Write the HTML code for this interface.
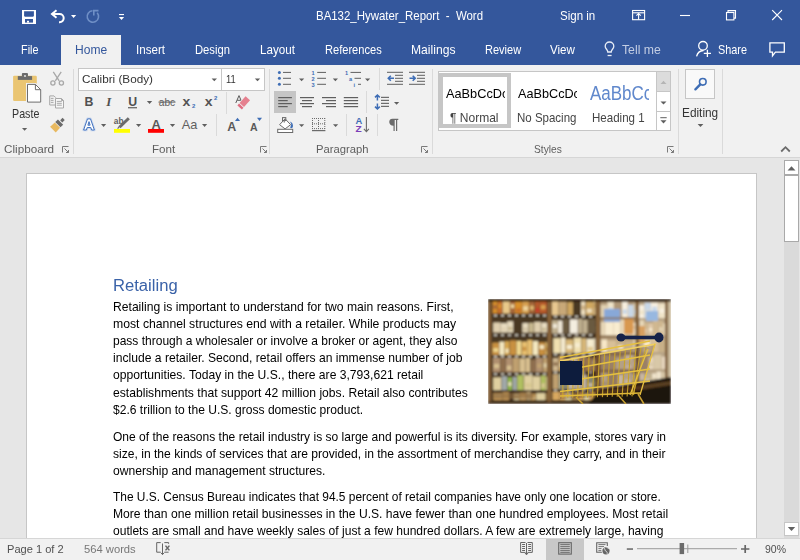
<!DOCTYPE html>
<html><head><meta charset="utf-8">
<style>
*{margin:0;padding:0;box-sizing:border-box}
html,body{width:800px;height:560px;overflow:hidden}
body{position:relative;background:#E6E6E6;font-family:"Liberation Sans",sans-serif}
.a{position:absolute}
.t{position:absolute;white-space:pre;line-height:1;transform-origin:0 0}
#ic{position:absolute;left:0;top:0;width:800px;height:560px;overflow:visible}
</style></head><body>

<!-- title bar + tabs -->
<div class="a" style="left:0;top:0;width:800px;height:65px;background:#34579C"></div>
<div class="a" style="left:61px;top:35px;width:60px;height:30px;background:#F1F1F1"></div>

<!-- ribbon body -->
<div class="a" style="left:0;top:65px;width:800px;height:92px;background:#F1F1F1"></div>
<div class="a" style="left:0;top:157px;width:800px;height:1px;background:#D6D6D6"></div>

<!-- font boxes -->
<div class="a" style="left:78px;top:68px;width:144px;height:23px;background:#fff;border:1px solid #C6C6C6"></div>
<div class="a" style="left:221px;top:68px;width:44px;height:23px;background:#fff;border:1px solid #C6C6C6"></div>
<!-- align left selected -->
<div class="a" style="left:274px;top:91px;width:22px;height:22px;background:#C5C5C5"></div>
<!-- styles gallery -->
<div class="a" style="left:438px;top:71px;width:219px;height:60px;background:#fff;border:1px solid #C6C6C6;border-right:none"></div>
<div class="a" style="left:439px;top:73px;width:72px;height:55px;border:4px solid #C6C6C6"></div>
<div class="a" style="left:656px;top:71px;width:15px;height:21px;background:#DCDCDC;border:1px solid #C6C6C6"></div>
<div class="a" style="left:656px;top:91px;width:15px;height:21px;background:#fff;border:1px solid #C6C6C6"></div>
<div class="a" style="left:656px;top:111px;width:15px;height:20px;background:#fff;border:1px solid #C6C6C6"></div>
<!-- editing button -->
<div class="a" style="left:685px;top:69px;width:30px;height:30px;background:#F9F9F9;border:1px solid #C6C6C6"></div>

<!-- document page -->
<div class="a" style="left:26px;top:173px;width:731px;height:400px;background:#fff;border:1px solid #C6C6C6"></div>
<svg class="a" style="left:488px;top:299px;width:183px;height:105px;overflow:hidden" viewBox="0 0 183 105">
<defs><filter id="bl" x="0" y="0" width="1" height="1"><feGaussianBlur stdDeviation="1.0"/></filter><filter id="bl2" x="-0.1" y="-0.1" width="1.2" height="1.2"><feGaussianBlur stdDeviation="0.4"/></filter></defs>
<g filter="url(#bl)"><rect x="0.0" y="0.0" width="183.0" height="105.0" fill="#4a3824"/>
<rect x="4.6" y="1.0" width="4.8" height="13.5" fill="#d9902a"/>
<rect x="5.4" y="6.0" width="3.3" height="4.0" fill="#a86838"/>
<rect x="9.6" y="1.8" width="4.4" height="12.7" fill="#c9702a"/>
<rect x="10.3" y="5.2" width="3.1" height="3.8" fill="#d9902a"/>
<rect x="14.6" y="1.3" width="7.2" height="13.2" fill="#e9c98a"/>
<rect x="15.7" y="4.0" width="5.0" height="4.0" fill="#e9c98a"/>
<rect x="22.1" y="1.8" width="4.7" height="12.7" fill="#a86838"/>
<rect x="22.8" y="5.3" width="3.3" height="3.8" fill="#f0d8a0"/>
<rect x="27.0" y="2.6" width="6.9" height="11.9" fill="#d9902a"/>
<rect x="28.0" y="9.5" width="4.8" height="3.6" fill="#c9702a"/>
<rect x="34.2" y="0.6" width="6.7" height="13.9" fill="#d8a050"/>
<rect x="35.2" y="7.3" width="4.7" height="4.2" fill="#f0d8a0"/>
<rect x="41.3" y="1.3" width="5.2" height="13.2" fill="#a86838"/>
<rect x="42.1" y="6.8" width="3.7" height="4.0" fill="#e0b870"/>
<rect x="47.1" y="1.8" width="4.6" height="12.7" fill="#b85a2a"/>
<rect x="47.8" y="9.2" width="3.2" height="3.8" fill="#c83a2a"/>
<rect x="51.8" y="0.5" width="6.8" height="14.0" fill="#b85a2a"/>
<rect x="52.8" y="6.1" width="4.8" height="4.2" fill="#d8a050"/>
<rect x="58.7" y="2.4" width="0.3" height="12.1" fill="#c83a2a"/>
<rect x="5.2" y="23.5" width="7.4" height="10.0" fill="#e0d0b0"/>
<rect x="12.7" y="24.2" width="6.3" height="9.3" fill="#e8dcc0"/>
<rect x="13.6" y="28.7" width="4.4" height="2.8" fill="#e0d0b0"/>
<rect x="19.2" y="22.3" width="6.0" height="11.2" fill="#e8dcc0"/>
<rect x="20.1" y="27.8" width="4.2" height="3.4" fill="#c8b890"/>
<rect x="34.4" y="24.1" width="5.9" height="9.4" fill="#e8dcc0"/>
<rect x="35.3" y="28.8" width="4.1" height="2.8" fill="#d0c0a0"/>
<rect x="40.8" y="23.9" width="4.9" height="9.6" fill="#c8b890"/>
<rect x="41.6" y="27.5" width="3.4" height="2.9" fill="#c8b890"/>
<rect x="46.2" y="23.0" width="6.6" height="10.5" fill="#e0d0b0"/>
<rect x="47.2" y="25.6" width="4.6" height="3.1" fill="#e0d0b0"/>
<rect x="53.3" y="23.6" width="5.7" height="9.9" fill="#e8dcc0"/>
<rect x="54.1" y="28.8" width="4.0" height="3.0" fill="#c8b890"/>
<rect x="4.2" y="43.6" width="7.0" height="12.4" fill="#c89040"/>
<rect x="5.3" y="49.2" width="4.9" height="3.7" fill="#f0d890"/>
<rect x="11.4" y="42.6" width="5.0" height="13.4" fill="#f4e8c0"/>
<rect x="16.7" y="42.2" width="4.6" height="13.8" fill="#d8a850"/>
<rect x="17.4" y="49.7" width="3.2" height="4.1" fill="#f4e8c0"/>
<rect x="21.8" y="41.4" width="6.4" height="14.6" fill="#c89040"/>
<rect x="28.5" y="42.0" width="4.7" height="14.0" fill="#f0d890"/>
<rect x="29.2" y="46.8" width="3.3" height="4.2" fill="#f0d890"/>
<rect x="33.7" y="42.6" width="5.3" height="13.4" fill="#e8c070"/>
<rect x="34.5" y="47.8" width="3.7" height="4.0" fill="#c89040"/>
<rect x="39.3" y="41.0" width="5.1" height="15.0" fill="#e8c070"/>
<rect x="44.9" y="42.1" width="5.1" height="13.9" fill="#f4e8c0"/>
<rect x="50.5" y="43.3" width="6.4" height="12.7" fill="#c89040"/>
<rect x="51.5" y="46.1" width="4.5" height="3.8" fill="#f4e8c0"/>
<rect x="57.4" y="43.2" width="1.6" height="12.8" fill="#e8c070"/>
<rect x="57.7" y="48.4" width="1.1" height="3.8" fill="#c89040"/>
<rect x="5.0" y="58.5" width="7.3" height="14.5" fill="#b09070"/>
<rect x="6.0" y="64.9" width="5.1" height="4.3" fill="#d8c090"/>
<rect x="12.6" y="58.5" width="4.9" height="14.5" fill="#907050"/>
<rect x="17.9" y="58.7" width="6.3" height="14.3" fill="#b09070"/>
<rect x="18.9" y="66.6" width="4.4" height="4.3" fill="#d8c090"/>
<rect x="24.6" y="59.0" width="6.3" height="14.0" fill="#c0a070"/>
<rect x="31.4" y="59.4" width="5.8" height="13.6" fill="#d8c090"/>
<rect x="37.6" y="58.7" width="4.5" height="14.3" fill="#d8c090"/>
<rect x="42.6" y="60.5" width="5.1" height="12.5" fill="#907050"/>
<rect x="47.9" y="58.4" width="6.7" height="14.6" fill="#b09070"/>
<rect x="49.0" y="64.5" width="4.7" height="4.4" fill="#c0a070"/>
<rect x="55.2" y="58.4" width="3.8" height="14.6" fill="#c0a070"/>
<rect x="55.7" y="64.2" width="2.7" height="4.4" fill="#e0d0a8"/>
<rect x="5.2" y="78.4" width="7.9" height="12.6" fill="#e0d0a0"/>
<rect x="13.5" y="77.1" width="5.6" height="13.9" fill="#a0a8a8"/>
<rect x="19.6" y="78.3" width="4.3" height="12.7" fill="#90b848"/>
<rect x="20.3" y="83.1" width="3.0" height="3.8" fill="#e8e0c0"/>
<rect x="24.5" y="77.8" width="4.3" height="13.2" fill="#a0a8a8"/>
<rect x="25.1" y="84.2" width="3.0" height="4.0" fill="#a0a8a8"/>
<rect x="29.2" y="75.5" width="6.4" height="15.5" fill="#b0c060"/>
<rect x="36.1" y="75.7" width="8.6" height="15.3" fill="#e0d0a0"/>
<rect x="37.4" y="84.1" width="6.0" height="4.6" fill="#d8c890"/>
<rect x="45.0" y="77.4" width="7.4" height="13.6" fill="#e0d0a0"/>
<rect x="52.9" y="76.3" width="4.8" height="14.7" fill="#b0c060"/>
<rect x="53.6" y="84.3" width="3.3" height="4.4" fill="#d8c890"/>
<rect x="57.9" y="77.5" width="1.1" height="13.5" fill="#d8c890"/>
<rect x="4.0" y="15.5" width="55.0" height="2.2" fill="#3a2e20"/>
<rect x="6.0" y="15.8" width="3.0" height="1.5" fill="#e8e4d8"/>
<rect x="13.0" y="15.8" width="3.0" height="1.5" fill="#e8e4d8"/>
<rect x="20.0" y="15.8" width="3.0" height="1.5" fill="#e8e4d8"/>
<rect x="27.0" y="15.8" width="3.0" height="1.5" fill="#e8e4d8"/>
<rect x="34.0" y="15.8" width="3.0" height="1.5" fill="#e8e4d8"/>
<rect x="41.0" y="15.8" width="3.0" height="1.5" fill="#e8e4d8"/>
<rect x="48.0" y="15.8" width="3.0" height="1.5" fill="#e8e4d8"/>
<rect x="55.0" y="15.8" width="3.0" height="1.5" fill="#e8e4d8"/>
<rect x="4.0" y="35.0" width="55.0" height="2.2" fill="#3a2e20"/>
<rect x="6.0" y="35.3" width="3.0" height="1.5" fill="#e8e4d8"/>
<rect x="13.0" y="35.3" width="3.0" height="1.5" fill="#e8e4d8"/>
<rect x="20.0" y="35.3" width="3.0" height="1.5" fill="#e8e4d8"/>
<rect x="27.0" y="35.3" width="3.0" height="1.5" fill="#e8e4d8"/>
<rect x="34.0" y="35.3" width="3.0" height="1.5" fill="#e8e4d8"/>
<rect x="41.0" y="35.3" width="3.0" height="1.5" fill="#e8e4d8"/>
<rect x="48.0" y="35.3" width="3.0" height="1.5" fill="#e8e4d8"/>
<rect x="55.0" y="35.3" width="3.0" height="1.5" fill="#e8e4d8"/>
<rect x="4.0" y="56.5" width="55.0" height="2.2" fill="#3a2e20"/>
<rect x="6.0" y="56.8" width="3.0" height="1.5" fill="#e8e4d8"/>
<rect x="13.0" y="56.8" width="3.0" height="1.5" fill="#e8e4d8"/>
<rect x="20.0" y="56.8" width="3.0" height="1.5" fill="#e8e4d8"/>
<rect x="27.0" y="56.8" width="3.0" height="1.5" fill="#e8e4d8"/>
<rect x="34.0" y="56.8" width="3.0" height="1.5" fill="#e8e4d8"/>
<rect x="41.0" y="56.8" width="3.0" height="1.5" fill="#e8e4d8"/>
<rect x="48.0" y="56.8" width="3.0" height="1.5" fill="#e8e4d8"/>
<rect x="55.0" y="56.8" width="3.0" height="1.5" fill="#e8e4d8"/>
<rect x="4.0" y="74.0" width="55.0" height="2.2" fill="#3a2e20"/>
<rect x="6.0" y="74.3" width="3.0" height="1.5" fill="#e8e4d8"/>
<rect x="13.0" y="74.3" width="3.0" height="1.5" fill="#e8e4d8"/>
<rect x="20.0" y="74.3" width="3.0" height="1.5" fill="#e8e4d8"/>
<rect x="27.0" y="74.3" width="3.0" height="1.5" fill="#e8e4d8"/>
<rect x="34.0" y="74.3" width="3.0" height="1.5" fill="#e8e4d8"/>
<rect x="41.0" y="74.3" width="3.0" height="1.5" fill="#e8e4d8"/>
<rect x="48.0" y="74.3" width="3.0" height="1.5" fill="#e8e4d8"/>
<rect x="55.0" y="74.3" width="3.0" height="1.5" fill="#e8e4d8"/>
<rect x="4.0" y="91.5" width="55.0" height="2.2" fill="#3a2e20"/>
<rect x="6.0" y="91.8" width="3.0" height="1.5" fill="#e8e4d8"/>
<rect x="13.0" y="91.8" width="3.0" height="1.5" fill="#e8e4d8"/>
<rect x="20.0" y="91.8" width="3.0" height="1.5" fill="#e8e4d8"/>
<rect x="27.0" y="91.8" width="3.0" height="1.5" fill="#e8e4d8"/>
<rect x="34.0" y="91.8" width="3.0" height="1.5" fill="#e8e4d8"/>
<rect x="41.0" y="91.8" width="3.0" height="1.5" fill="#e8e4d8"/>
<rect x="48.0" y="91.8" width="3.0" height="1.5" fill="#e8e4d8"/>
<rect x="55.0" y="91.8" width="3.0" height="1.5" fill="#e8e4d8"/>
<rect x="4.0" y="92.0" width="55.0" height="11.0" fill="#3a2c1c"/>
<rect x="5.4" y="93.8" width="9.0" height="7.2" fill="#d8a860"/>
<rect x="6.8" y="96.0" width="6.3" height="2.2" fill="#c8b080"/>
<rect x="14.7" y="93.2" width="6.3" height="7.8" fill="#d8a860"/>
<rect x="25.8" y="94.5" width="5.3" height="6.5" fill="#e0d0a0"/>
<rect x="26.6" y="97.3" width="3.7" height="1.9" fill="#a08050"/>
<rect x="31.4" y="93.6" width="6.7" height="7.4" fill="#d8a860"/>
<rect x="32.4" y="97.9" width="4.7" height="2.2" fill="#e0d0a0"/>
<rect x="38.4" y="92.7" width="4.4" height="8.3" fill="#c8b080"/>
<rect x="39.1" y="94.9" width="3.1" height="2.5" fill="#c8b080"/>
<rect x="43.0" y="94.6" width="4.6" height="6.4" fill="#d8a860"/>
<rect x="43.7" y="98.1" width="3.2" height="1.9" fill="#e0d0a0"/>
<rect x="48.2" y="94.1" width="8.8" height="6.9" fill="#e0d0a0"/>
<rect x="49.5" y="97.4" width="6.2" height="2.1" fill="#e0d0a0"/>
<rect x="57.3" y="94.2" width="1.7" height="6.8" fill="#a08050"/>
<rect x="6.0" y="94.0" width="40.0" height="6.0" fill="#8a6a40" opacity="0.7"/>
<rect x="64.0" y="0.3" width="6.5" height="15.7" fill="#e8c890"/>
<rect x="70.7" y="2.4" width="8.1" height="13.6" fill="#c8a878"/>
<rect x="79.4" y="3.2" width="5.5" height="12.8" fill="#d0a860"/>
<rect x="93.1" y="1.7" width="4.1" height="14.3" fill="#f0e0c0"/>
<rect x="93.7" y="6.4" width="2.8" height="4.3" fill="#c8a878"/>
<rect x="97.7" y="2.9" width="7.4" height="13.1" fill="#d0a860"/>
<rect x="98.8" y="9.8" width="5.1" height="3.9" fill="#f0e0c0"/>
<rect x="105.4" y="0.4" width="2.2" height="15.6" fill="#e8c890"/>
<rect x="105.7" y="4.2" width="1.6" height="4.7" fill="#d0a860"/>
<rect x="64.0" y="21.2" width="5.9" height="13.3" fill="#c0b090"/>
<rect x="64.9" y="25.0" width="4.1" height="4.0" fill="#f0e8d8"/>
<rect x="70.1" y="21.5" width="4.4" height="13.0" fill="#f0e8d8"/>
<rect x="70.8" y="26.0" width="3.1" height="3.9" fill="#f0e8d8"/>
<rect x="75.0" y="20.2" width="6.6" height="14.3" fill="#6a5a40"/>
<rect x="82.0" y="20.3" width="7.8" height="14.2" fill="#f4eee0"/>
<rect x="90.3" y="19.9" width="4.2" height="14.6" fill="#c0b090"/>
<rect x="95.0" y="21.0" width="4.7" height="13.5" fill="#c0b090"/>
<rect x="99.8" y="20.0" width="7.4" height="14.5" fill="#6a5a40"/>
<rect x="107.4" y="22.4" width="0.2" height="12.1" fill="#5aa0a0"/>
<rect x="107.5" y="27.5" width="0.1" height="3.6" fill="#f0e8d8"/>
<rect x="65.3" y="39.2" width="7.4" height="14.8" fill="#f0e0b0"/>
<rect x="66.4" y="42.6" width="5.2" height="4.4" fill="#f0e0b0"/>
<rect x="73.1" y="38.3" width="4.3" height="15.7" fill="#f6ecd0"/>
<rect x="77.6" y="40.3" width="7.8" height="13.7" fill="#d8b878"/>
<rect x="78.8" y="45.9" width="5.4" height="4.1" fill="#f6ecd0"/>
<rect x="85.9" y="38.6" width="7.1" height="15.4" fill="#f0e0b0"/>
<rect x="87.0" y="43.8" width="5.0" height="4.6" fill="#f6ecd0"/>
<rect x="93.4" y="39.3" width="4.7" height="14.7" fill="#d8b878"/>
<rect x="98.5" y="40.0" width="7.4" height="14.0" fill="#f6ecd0"/>
<rect x="99.6" y="47.8" width="5.2" height="4.2" fill="#e0c890"/>
<rect x="106.1" y="39.3" width="1.5" height="14.7" fill="#f6ecd0"/>
<rect x="64.9" y="59.2" width="5.3" height="12.8" fill="#d0b890"/>
<rect x="65.7" y="63.1" width="3.7" height="3.8" fill="#907050"/>
<rect x="70.8" y="56.9" width="4.7" height="15.1" fill="#c8a060"/>
<rect x="71.5" y="63.8" width="3.3" height="4.5" fill="#e0d0a8"/>
<rect x="76.0" y="59.9" width="6.4" height="12.1" fill="#b09070"/>
<rect x="82.8" y="58.4" width="7.6" height="13.6" fill="#e0d0a8"/>
<rect x="90.5" y="56.9" width="7.8" height="15.1" fill="#b09070"/>
<rect x="91.7" y="65.9" width="5.4" height="4.5" fill="#907050"/>
<rect x="98.5" y="58.5" width="4.3" height="13.5" fill="#c8a060"/>
<rect x="103.3" y="58.9" width="4.3" height="13.1" fill="#b09070"/>
<rect x="103.9" y="61.9" width="3.0" height="3.9" fill="#d0b890"/>
<rect x="64.9" y="75.1" width="5.6" height="14.9" fill="#c0a070"/>
<rect x="70.9" y="74.5" width="8.6" height="15.5" fill="#a0a890"/>
<rect x="72.2" y="78.0" width="6.0" height="4.7" fill="#c0a070"/>
<rect x="79.8" y="75.6" width="7.8" height="14.4" fill="#e8e0c8"/>
<rect x="87.9" y="76.4" width="4.9" height="13.6" fill="#e8e0c8"/>
<rect x="93.3" y="75.5" width="5.3" height="14.5" fill="#e8e0c8"/>
<rect x="98.8" y="77.7" width="7.2" height="12.3" fill="#a0a890"/>
<rect x="99.9" y="84.0" width="5.1" height="3.7" fill="#e8e0c8"/>
<rect x="106.6" y="77.5" width="1.0" height="12.5" fill="#98c058"/>
<rect x="106.8" y="82.2" width="0.7" height="3.8" fill="#e8e0c8"/>
<rect x="64.0" y="16.5" width="43.6" height="2.2" fill="#3a2e20"/>
<rect x="66.0" y="16.8" width="3.0" height="1.5" fill="#e8e4d8"/>
<rect x="73.0" y="16.8" width="3.0" height="1.5" fill="#e8e4d8"/>
<rect x="80.0" y="16.8" width="3.0" height="1.5" fill="#e8e4d8"/>
<rect x="87.0" y="16.8" width="3.0" height="1.5" fill="#e8e4d8"/>
<rect x="94.0" y="16.8" width="3.0" height="1.5" fill="#e8e4d8"/>
<rect x="101.0" y="16.8" width="3.0" height="1.5" fill="#e8e4d8"/>
<rect x="64.0" y="35.0" width="43.6" height="2.2" fill="#3a2e20"/>
<rect x="66.0" y="35.3" width="3.0" height="1.5" fill="#e8e4d8"/>
<rect x="73.0" y="35.3" width="3.0" height="1.5" fill="#e8e4d8"/>
<rect x="80.0" y="35.3" width="3.0" height="1.5" fill="#e8e4d8"/>
<rect x="87.0" y="35.3" width="3.0" height="1.5" fill="#e8e4d8"/>
<rect x="94.0" y="35.3" width="3.0" height="1.5" fill="#e8e4d8"/>
<rect x="101.0" y="35.3" width="3.0" height="1.5" fill="#e8e4d8"/>
<rect x="64.0" y="54.5" width="43.6" height="2.2" fill="#3a2e20"/>
<rect x="66.0" y="54.8" width="3.0" height="1.5" fill="#e8e4d8"/>
<rect x="73.0" y="54.8" width="3.0" height="1.5" fill="#e8e4d8"/>
<rect x="80.0" y="54.8" width="3.0" height="1.5" fill="#e8e4d8"/>
<rect x="87.0" y="54.8" width="3.0" height="1.5" fill="#e8e4d8"/>
<rect x="94.0" y="54.8" width="3.0" height="1.5" fill="#e8e4d8"/>
<rect x="101.0" y="54.8" width="3.0" height="1.5" fill="#e8e4d8"/>
<rect x="64.0" y="72.5" width="43.6" height="2.2" fill="#3a2e20"/>
<rect x="66.0" y="72.8" width="3.0" height="1.5" fill="#e8e4d8"/>
<rect x="73.0" y="72.8" width="3.0" height="1.5" fill="#e8e4d8"/>
<rect x="80.0" y="72.8" width="3.0" height="1.5" fill="#e8e4d8"/>
<rect x="87.0" y="72.8" width="3.0" height="1.5" fill="#e8e4d8"/>
<rect x="94.0" y="72.8" width="3.0" height="1.5" fill="#e8e4d8"/>
<rect x="101.0" y="72.8" width="3.0" height="1.5" fill="#e8e4d8"/>
<rect x="64.0" y="90.5" width="43.6" height="2.2" fill="#3a2e20"/>
<rect x="66.0" y="90.8" width="3.0" height="1.5" fill="#e8e4d8"/>
<rect x="73.0" y="90.8" width="3.0" height="1.5" fill="#e8e4d8"/>
<rect x="80.0" y="90.8" width="3.0" height="1.5" fill="#e8e4d8"/>
<rect x="87.0" y="90.8" width="3.0" height="1.5" fill="#e8e4d8"/>
<rect x="94.0" y="90.8" width="3.0" height="1.5" fill="#e8e4d8"/>
<rect x="101.0" y="90.8" width="3.0" height="1.5" fill="#e8e4d8"/>
<rect x="64.0" y="92.0" width="43.6" height="11.0" fill="#3a2c1c"/>
<rect x="64.5" y="92.8" width="6.8" height="8.2" fill="#d8a860"/>
<rect x="71.6" y="93.1" width="5.4" height="7.9" fill="#d8a860"/>
<rect x="77.1" y="93.3" width="6.5" height="7.7" fill="#e0d0a0"/>
<rect x="83.9" y="93.7" width="7.2" height="7.3" fill="#a08050"/>
<rect x="91.2" y="93.2" width="4.2" height="7.8" fill="#d8a860"/>
<rect x="91.9" y="97.6" width="2.9" height="2.3" fill="#d8a860"/>
<rect x="96.0" y="94.4" width="5.2" height="6.6" fill="#e0d0a0"/>
<rect x="101.4" y="93.2" width="6.2" height="7.8" fill="#d8a860"/>
<rect x="112.0" y="3.0" width="35.6" height="88.0" fill="#b09878"/>
<rect x="112.3" y="5.9" width="6.8" height="12.1" fill="#e0d0b0"/>
<rect x="119.5" y="3.1" width="6.2" height="14.9" fill="#f0e4c8"/>
<rect x="120.4" y="8.6" width="4.3" height="4.5" fill="#c8d8e8"/>
<rect x="134.1" y="2.9" width="5.6" height="15.1" fill="#f8f0e0"/>
<rect x="134.9" y="10.4" width="3.9" height="4.5" fill="#c8d8e8"/>
<rect x="140.1" y="5.9" width="5.5" height="12.1" fill="#c8d8e8"/>
<rect x="145.8" y="4.4" width="1.8" height="13.6" fill="#e0d0b0"/>
<rect x="146.1" y="10.7" width="1.3" height="4.1" fill="#c8d8e8"/>
<rect x="112.8" y="22.9" width="4.0" height="13.1" fill="#e8d8b8"/>
<rect x="117.1" y="23.1" width="8.1" height="12.9" fill="#f8ecd0"/>
<rect x="125.3" y="21.7" width="7.1" height="14.3" fill="#f8ecd0"/>
<rect x="132.6" y="20.5" width="7.0" height="15.5" fill="#e8d8b8"/>
<rect x="139.7" y="23.8" width="4.3" height="12.2" fill="#e0c8a8"/>
<rect x="144.2" y="23.7" width="3.4" height="12.3" fill="#f8ecd0"/>
<rect x="144.7" y="26.5" width="2.3" height="3.7" fill="#e0c8a8"/>
<rect x="113.3" y="40.5" width="5.9" height="12.5" fill="#f8e8c8"/>
<rect x="114.2" y="47.6" width="4.1" height="3.8" fill="#f0e0c0"/>
<rect x="119.5" y="41.4" width="8.8" height="11.6" fill="#d8c098"/>
<rect x="128.5" y="41.5" width="8.0" height="11.5" fill="#c8b088"/>
<rect x="129.7" y="46.3" width="5.6" height="3.5" fill="#f8e8c8"/>
<rect x="136.8" y="41.7" width="8.5" height="11.3" fill="#c8b088"/>
<rect x="145.6" y="40.2" width="2.0" height="12.8" fill="#f0e0c0"/>
<rect x="112.7" y="55.4" width="5.4" height="14.6" fill="#b8a080"/>
<rect x="118.5" y="57.8" width="8.6" height="12.2" fill="#b8a080"/>
<rect x="127.5" y="58.7" width="8.7" height="11.3" fill="#d8c8a8"/>
<rect x="136.6" y="56.0" width="7.9" height="14.0" fill="#e8d8c0"/>
<rect x="137.8" y="61.6" width="5.5" height="4.2" fill="#d8c8a8"/>
<rect x="145.0" y="55.9" width="2.6" height="14.1" fill="#d8c8a8"/>
<rect x="145.4" y="62.6" width="1.9" height="4.2" fill="#e8d8c0"/>
<rect x="113.2" y="74.5" width="6.6" height="13.5" fill="#d8c8a8"/>
<rect x="114.2" y="82.4" width="4.6" height="4.0" fill="#c0b090"/>
<rect x="130.2" y="75.5" width="4.9" height="12.5" fill="#f0e4cc"/>
<rect x="135.5" y="73.5" width="8.2" height="14.5" fill="#d8c8a8"/>
<rect x="136.7" y="80.6" width="5.8" height="4.3" fill="#f0e4cc"/>
<rect x="144.0" y="75.3" width="3.6" height="12.7" fill="#d8c8a8"/>
<rect x="144.6" y="81.5" width="2.5" height="3.8" fill="#c0b090"/>
<rect x="116.0" y="10.0" width="16.0" height="13.0" fill="#88a8d8"/>
<rect x="136.0" y="18.0" width="9.5" height="17.0" fill="#d89850"/>
<rect x="112.0" y="18.5" width="35.6" height="1.6" fill="#8a7050"/>
<rect x="112.0" y="37.0" width="35.6" height="1.6" fill="#8a7050"/>
<rect x="112.0" y="54.0" width="35.6" height="1.6" fill="#8a7050"/>
<rect x="112.0" y="71.0" width="35.6" height="1.6" fill="#8a7050"/>
<rect x="112.0" y="88.5" width="35.6" height="1.6" fill="#8a7050"/>
<rect x="151.0" y="3.0" width="26.0" height="85.0" fill="#b8a486"/>
<rect x="151.1" y="6.1" width="5.3" height="12.9" fill="#f8f0e0"/>
<rect x="151.9" y="11.4" width="3.7" height="3.9" fill="#f0e4c8"/>
<rect x="156.5" y="3.9" width="6.4" height="15.1" fill="#c8d8e8"/>
<rect x="157.5" y="11.2" width="4.5" height="4.5" fill="#f0e4c8"/>
<rect x="163.0" y="3.9" width="7.0" height="15.1" fill="#f8f0e0"/>
<rect x="164.1" y="7.7" width="4.9" height="4.5" fill="#c8d8e8"/>
<rect x="170.4" y="4.5" width="6.6" height="14.5" fill="#f0e4c8"/>
<rect x="171.4" y="9.6" width="4.6" height="4.3" fill="#f8f0e0"/>
<rect x="151.7" y="21.3" width="4.2" height="14.7" fill="#e8d8b8"/>
<rect x="156.1" y="23.7" width="4.1" height="12.3" fill="#d0b890"/>
<rect x="156.7" y="30.1" width="2.8" height="3.7" fill="#e0c8a8"/>
<rect x="160.5" y="24.4" width="4.3" height="11.6" fill="#e0c8a8"/>
<rect x="161.2" y="28.9" width="3.0" height="3.5" fill="#f8ecd0"/>
<rect x="165.1" y="21.3" width="5.4" height="14.7" fill="#d0b890"/>
<rect x="166.0" y="25.8" width="3.7" height="4.4" fill="#d0b890"/>
<rect x="170.8" y="22.1" width="4.1" height="13.9" fill="#d0b890"/>
<rect x="171.4" y="28.2" width="2.9" height="4.2" fill="#e8d8b8"/>
<rect x="175.2" y="24.4" width="1.8" height="11.6" fill="#e8d8b8"/>
<rect x="151.3" y="39.9" width="4.1" height="13.1" fill="#c8b088"/>
<rect x="155.7" y="41.3" width="6.5" height="11.7" fill="#f8e8c8"/>
<rect x="156.7" y="48.0" width="4.6" height="3.5" fill="#c8b088"/>
<rect x="162.6" y="38.4" width="8.0" height="14.6" fill="#d8c098"/>
<rect x="170.7" y="40.7" width="6.3" height="12.3" fill="#c8b088"/>
<rect x="152.8" y="55.8" width="7.2" height="14.2" fill="#b8a080"/>
<rect x="160.5" y="58.0" width="4.9" height="12.0" fill="#e8d8c0"/>
<rect x="161.2" y="63.5" width="3.4" height="3.6" fill="#d8c8a8"/>
<rect x="165.6" y="55.7" width="7.6" height="14.3" fill="#d8c8a8"/>
<rect x="173.7" y="57.7" width="3.3" height="12.3" fill="#e8d8c0"/>
<rect x="174.2" y="62.0" width="2.3" height="3.7" fill="#e8d8c0"/>
<rect x="151.6" y="74.3" width="5.2" height="11.7" fill="#f0e4cc"/>
<rect x="152.4" y="81.2" width="3.7" height="3.5" fill="#c0b090"/>
<rect x="157.5" y="74.1" width="6.3" height="11.9" fill="#c0b090"/>
<rect x="158.4" y="80.4" width="4.4" height="3.6" fill="#f0e4cc"/>
<rect x="164.1" y="74.4" width="4.3" height="11.6" fill="#f0e4cc"/>
<rect x="164.7" y="79.0" width="3.0" height="3.5" fill="#d8c8a8"/>
<rect x="168.5" y="72.6" width="4.7" height="13.4" fill="#f0e4cc"/>
<rect x="169.2" y="80.4" width="3.3" height="4.0" fill="#c0b090"/>
<rect x="173.7" y="73.1" width="3.3" height="12.9" fill="#d8c8a8"/>
<rect x="158.0" y="12.0" width="12.0" height="10.0" fill="#98b8e0"/>
<rect x="149.0" y="27.0" width="8.0" height="16.0" fill="#d8a060"/>
<rect x="179.3" y="0.0" width="3.7" height="90.0" fill="#c8b898"/>
<rect x="0.0" y="0.0" width="3.5" height="103.0" fill="#6e4e2a"/>
<rect x="1.1" y="0.0" width="1.2" height="103.0" fill="#a07848" opacity="0.8"/>
<rect x="59.0" y="0.0" width="5.0" height="103.0" fill="#6e4e2a"/>
<rect x="60.5" y="0.0" width="1.8" height="103.0" fill="#a07848" opacity="0.8"/>
<rect x="107.6" y="0.0" width="4.7" height="103.0" fill="#6e4e2a"/>
<rect x="109.0" y="0.0" width="1.6" height="103.0" fill="#a07848" opacity="0.8"/>
<rect x="147.6" y="0.0" width="3.4" height="103.0" fill="#6e4e2a"/>
<rect x="148.6" y="0.0" width="1.2" height="103.0" fill="#a07848" opacity="0.8"/>
<rect x="177.0" y="0.0" width="2.3" height="103.0" fill="#6e4e2a"/>
<rect x="177.7" y="0.0" width="0.8" height="103.0" fill="#a07848" opacity="0.8"/>
<rect x="0.0" y="0.0" width="183.0" height="2.5" fill="#2a1e10"/>
<rect x="0.0" y="102.5" width="183.0" height="2.5" fill="#4a3520"/>
<path d="M112,90 L183,78 L183,105 L100,105 Z" fill="#1c140c"/>
<path d="M112,92 L183,82 L183,86 L112,97 Z" fill="#6a4a28" opacity="0.8"/></g>
<g filter="url(#bl2)"><path d="M72,63 L167,46 L152,96 L72,100 Z" fill="#1e160c" opacity="0.2"/><path d="M75.0,62.5 L74.8,98.9" stroke="#c9a22a" stroke-width="1.1" opacity="0.95"/><path d="M80.2,61.5 L79.8,98.8" stroke="#c9a22a" stroke-width="1.1" opacity="0.95"/><path d="M85.4,60.6 L84.7,98.7" stroke="#c9a22a" stroke-width="1.1" opacity="0.95"/><path d="M90.6,59.7 L89.7,98.6" stroke="#c9a22a" stroke-width="1.1" opacity="0.95"/><path d="M95.8,58.7 L94.6,98.5" stroke="#c9a22a" stroke-width="1.1" opacity="0.95"/><path d="M101.0,57.8 L99.5,98.4" stroke="#c9a22a" stroke-width="1.1" opacity="0.95"/><path d="M106.2,56.9 L104.5,98.3" stroke="#c9a22a" stroke-width="1.1" opacity="0.95"/><path d="M111.4,55.9 L109.4,98.2" stroke="#c9a22a" stroke-width="1.1" opacity="0.95"/><path d="M116.6,55.0 L114.4,98.1" stroke="#c9a22a" stroke-width="1.1" opacity="0.95"/><path d="M121.8,54.1 L119.3,98.0" stroke="#c9a22a" stroke-width="1.1" opacity="0.95"/><path d="M127.0,53.2 L124.2,97.8" stroke="#c9a22a" stroke-width="1.1" opacity="0.95"/><path d="M132.2,52.2 L129.2,97.7" stroke="#c9a22a" stroke-width="1.1" opacity="0.95"/><path d="M137.4,51.3 L134.1,97.6" stroke="#c9a22a" stroke-width="1.1" opacity="0.95"/><path d="M142.6,50.4 L139.1,97.5" stroke="#c9a22a" stroke-width="1.1" opacity="0.95"/><path d="M147.8,49.4 L144.0,97.4" stroke="#c9a22a" stroke-width="1.1" opacity="0.95"/><path d="M153.0,48.5 L145.6,96.0" stroke="#c9a22a" stroke-width="1.1" opacity="0.95"/><path d="M158.2,47.6 L144.9,96.0" stroke="#c9a22a" stroke-width="1.1" opacity="0.95"/><path d="M72,58.5 L162,42" stroke="#e6c040" stroke-width="1.3"/><path d="M72,72 L162,56" stroke="#e6c040" stroke-width="1.3"/><path d="M72,83 L162,70" stroke="#e6c040" stroke-width="1.3"/><path d="M72,92.5 L162,82" stroke="#e6c040" stroke-width="1.3"/><path d="M72,62 L168,45" stroke="#f0d060" stroke-width="1.6"/><path d="M167,45 L152,96 M160,50 L142,96" stroke="#e6c040" stroke-width="1.3"/><path d="M88,98 L95,105 M130,96 L138,105 M150,95 L156,105" stroke="#c8a030" stroke-width="1.5"/><path d="M72,97 L152,94" stroke="#e0b838" stroke-width="1.6"/><rect x="72" y="62" width="22" height="24" fill="#101c3c"/><path d="M132,38.5 L172,38.5" stroke="#12204a" stroke-width="3.4"/><ellipse cx="133" cy="38.5" rx="4.5" ry="4" fill="#12204a"/><ellipse cx="171" cy="38.5" rx="4.5" ry="5" fill="#12204a"/></g>
</svg>
<!-- scrollbar -->
<div class="a" style="left:784px;top:160px;width:15px;height:378px;background:#DADADA"></div>
<div class="a" style="left:784px;top:160px;width:15px;height:15px;background:#fff;border:1px solid #A9A9A9"></div>
<div class="a" style="left:784px;top:175px;width:15px;height:67px;background:#fff;border:1px solid #A9A9A9"></div>
<div class="a" style="left:784px;top:522px;width:15px;height:14px;background:#fff;border:1px solid #C6C6C6"></div>

<!-- status bar -->
<div class="a" style="left:0;top:538px;width:800px;height:22px;background:#F1F1F1;border-top:1px solid #D6D6D6"></div>
<div class="a" style="left:546px;top:539px;width:38px;height:21px;background:#C8C8C8"></div>

<svg id="ic" viewBox="0 0 800 560">
<!-- ===== title bar icons ===== -->
<g fill="#fff">
  <rect x="22" y="10" width="14" height="14"/>
</g>
<g fill="#34579C">
  <path d="M24.1,11.3 H33.9 V15.9 L33.1,16.7 H24.9 L24.1,15.9 Z"/>
  <rect x="25" y="19" width="8" height="3.6"/>
</g>
<rect x="27" y="20.8" width="2" height="1.8" fill="#fff"/>
<g fill="none" stroke="#fff" stroke-width="2">
  <path d="M56.5,10.3 L52,14 L56.5,17.7"/>
  <path d="M51.8,14 H59.6 A4.1,4.1 0 0 1 59.6,22.2 H59"/>
</g>
<path d="M71,15 H76.2 L73.6,17.9 Z" fill="#fff"/>
<g fill="none" stroke="#6F8FC6" stroke-width="1.6">
  <path d="M97.2,12.8 A5.7,5.7 0 1 1 92.5,10.8"/>
  <path d="M93.8,15.6 V10.6 H98.5"/>
</g>
<rect x="119" y="14" width="5" height="1.1" fill="#fff"/>
<path d="M118.9,17.1 H124.1 L121.5,20.1 Z" fill="#fff"/>

<g fill="none" stroke="#fff" stroke-width="1.1">
  <rect x="632.6" y="10.5" width="12" height="9.2"/>
  <path d="M633,12.8 H644.2"/>
  <path d="M638.6,13.5 V19.7 M636.4,15.6 L638.6,13.6 L640.8,15.6"/>
  <path d="M680,15.5 H690"/>
  <path d="M728,12.5 V10.6 H735.5 V18.1 H734"/>
  <rect x="726.5" y="12.5" width="7.4" height="7.4"/>
  <path d="M772.2,10.2 L782,20 M782,10.2 L772.2,20"/>
</g>
<!-- tell me / share / comment -->
<g fill="none" stroke="#fff" stroke-width="1.3">
  <path d="M607.8,52 C607.8,49.6 605.2,48.9 605.2,46.3 A4.3,4.3 0 0 1 613.8,46.3 C613.8,48.9 611.2,49.6 611.2,52 Z" stroke="#E8EDF6"/>
  <path d="M607.6,55.5 H611.6" stroke="#E8EDF6"/>
  <circle cx="703" cy="45.8" r="4.3"/>
  <path d="M696.6,56.4 A7.5,7.5 0 0 1 703.5,50.5"/>
  <path d="M707.4,49.8 V57 M703.8,53.4 H711"/>
  <path d="M769.9,42.8 H784.3 V52.1 H775.4 L772.5,55.8 V52.1 H769.9 Z"/>
</g>

<!-- ===== ribbon: clipboard ===== -->
<rect x="13.1" y="75.8" width="23.7" height="25.1" rx="1.2" fill="#EAC572"/>
<rect x="17.8" y="76.1" width="14.3" height="3.8" fill="#6B6B6B"/>
<rect x="21.9" y="73.1" width="6.1" height="3.5" rx="1" fill="#6B6B6B"/>
<circle cx="25" cy="76" r="0.9" fill="#F1F1F1"/>
<path d="M26,82.9 H36 L42.2,89 V103.6 H26 Z" fill="#F1F1F1"/>
<path d="M27.5,84.4 H35.4 L40.7,89.7 V102.1 H27.5 Z" fill="#fff" stroke="#6E6E6E" stroke-width="1"/>
<path d="M35.4,84.4 V89.7 H40.7" fill="none" stroke="#6E6E6E" stroke-width="1"/>
<path d="M22,128 H27.2 L24.6,130.8 Z" fill="#5F5F5F"/>
<!-- scissors -->
<g fill="none" stroke="#A8A8A8" stroke-width="1.3">
  <path d="M53.3,71.8 L59.2,80.8 M61.2,71.8 L55.3,80.8"/>
  <circle cx="52.9" cy="83" r="2.1"/>
  <circle cx="61.4" cy="83" r="2.1"/>
</g>
<!-- copy -->
<g fill="none" stroke="#A8A8A8" stroke-width="1">
  <path d="M49.7,95.9 H54 L55.8,97.7 M55,105 H49.7 V95.9"/>
  <path d="M50.8,98.4 H53.5 M50.8,100.4 H53.5 M50.8,102.4 H53.5"/>
  <path d="M55.5,98.5 H61.5 L63.5,100.5 V108 H55.5 Z" fill="#F7F7F7"/>
  <path d="M61.5,98.5 V100.5 H63.5"/>
  <path d="M56.8,101.4 H61.8 M56.8,103.3 H61.8 M56.8,105.2 H61.8"/>
</g>
<!-- format painter -->
<g transform="translate(59,123.6) rotate(-45)">
  <rect x="3.2" y="-1.5" width="3.4" height="3" fill="#6B6B6B"/>
  <rect x="-1.6" y="-3.7" width="3.8" height="7.4" fill="#6B6B6B"/>
  <path d="M-2.2,-3.7 L-8.6,-4 L-8.6,4 L-2.2,3.7 Z" fill="#E8B960"/>
</g>
<!-- separators -->
<g fill="#DADADA">
  <rect x="73" y="69" width="1" height="85"/>
  <rect x="269" y="69" width="1" height="85"/>
  <rect x="432" y="69" width="1" height="85"/>
  <rect x="678" y="69" width="1" height="85"/>
  <rect x="722" y="69" width="1" height="85"/>
  <rect x="226" y="92" width="1" height="22"/>
  <rect x="216" y="114" width="1" height="22"/>
  <rect x="379" y="68" width="1" height="22"/>
  <rect x="366" y="91" width="1" height="22"/>
  <rect x="346" y="114" width="1" height="22"/>
  <rect x="377" y="114" width="1" height="22"/>
</g>
<!-- launchers -->
<g fill="none" stroke="#7A7A7A" stroke-width="1">
  <path d="M62.5,152.5 V146.5 H68.5 M64.5,148.5 L68.5,152.5 M68.5,150 V152.5 H66"/>
  <path d="M260.5,152.5 V146.5 H266.5 M262.5,148.5 L266.5,152.5 M266.5,150 V152.5 H264"/>
  <path d="M421.5,152.5 V146.5 H427.5 M423.5,148.5 L427.5,152.5 M427.5,150 V152.5 H425"/>
  <path d="M667.5,152.5 V146.5 H673.5 M669.5,148.5 L673.5,152.5 M673.5,150 V152.5 H671"/>
</g>
<!-- collapse caret -->
<path d="M781.2,151.5 L785.5,147.2 L789.8,151.5" fill="none" stroke="#6B6B6B" stroke-width="1.8"/>

<!-- ===== font group ===== -->
<g fill="#5F5F5F">
  <path d="M211.6,78.5 H217 L214.3,81.3 Z"/>
  <path d="M254.8,78.5 H260.2 L257.5,81.3 Z"/>
  <path d="M146.9,101 H152.2 L149.55,103.9 Z"/>
  <path d="M101,124.1 H106.2 L103.6,127 Z"/>
  <path d="M136,124.1 H141.2 L138.6,127 Z"/>
  <path d="M169.9,124.1 H175.1 L172.5,127 Z"/>
  <path d="M202,124.1 H207.2 L204.6,127 Z"/>
</g>
<text x="84.5" y="105.8" font-family="Liberation Sans" font-weight="bold" font-size="12.3" fill="#505050">B</text>
<text x="106.3" y="105.8" font-family="Liberation Serif" font-style="italic" font-weight="bold" font-size="12.8" fill="#505050">I</text>
<text x="128.2" y="105.8" font-family="Liberation Sans" font-weight="bold" font-size="12.3" fill="#505050">U</text>
<rect x="128" y="107.2" width="9" height="1.1" fill="#505050"/>
<text x="158.8" y="105.8" font-family="Liberation Sans" font-size="11" fill="#5F5F5F" textLength="16.4" lengthAdjust="spacingAndGlyphs">abc</text>
<rect x="158.5" y="101.6" width="17" height="1" fill="#5F5F5F"/>
<text x="182.6" y="106.1" font-family="Liberation Sans" font-weight="bold" font-size="13.2" fill="#555" textLength="7.8" lengthAdjust="spacingAndGlyphs">x</text>
<text x="191.9" y="108.1" font-family="Liberation Sans" font-weight="bold" font-size="6" fill="#3E6DB5">2</text>
<text x="204.8" y="106.1" font-family="Liberation Sans" font-weight="bold" font-size="13.2" fill="#555" textLength="7.8" lengthAdjust="spacingAndGlyphs">x</text>
<text x="213.9" y="100.3" font-family="Liberation Sans" font-weight="bold" font-size="6" fill="#3E6DB5">2</text>
<!-- clear formatting -->
<path d="M235.8,103 L239,95.6 L242.2,103 M237.2,100.3 H240.8" fill="none" stroke="#5A5A5A" stroke-width="1"/>
<g transform="translate(243.8,102.8) rotate(-48)">
  <rect x="-6.3" y="-3.6" width="13" height="7.2" fill="#F1F1F1"/>
  <rect x="-3" y="-3" width="9" height="6" fill="#E5808F"/>
  <rect x="-6.2" y="-3" width="2.4" height="6" fill="#E06C80"/>
</g>
<!-- text effects -->
<path d="M83.6,130 L87.5,118.9 H90.5 L94.4,130 H91.6 L90.8,127.5 H87.2 L86.4,130 Z M87.9,125.2 H90.1 L89,121.6 Z" fill="#fff" fill-rule="evenodd" stroke="#C9D7EE" stroke-width="2.6" stroke-linejoin="round"/>
<path d="M83.6,130 L87.5,118.9 H90.5 L94.4,130 H91.6 L90.8,127.5 H87.2 L86.4,130 Z M87.9,125.2 H90.1 L89,121.6 Z" fill="#fff" fill-rule="evenodd" stroke="#4574BF" stroke-width="1.0" stroke-linejoin="round"/>
<!-- highlighter -->
<text x="113.8" y="123.9" font-family="Liberation Sans" font-weight="bold" font-size="8.3" fill="#5F5F5F">ab</text>
<path d="M119.5,127.3 L128.8,118.2" stroke="#6B6B6B" stroke-width="3" fill="none"/>
<path d="M117.6,128.6 L119.3,126.6" stroke="#6B6B6B" stroke-width="1.2" fill="none"/>
<rect x="114" y="129" width="16" height="3.8" fill="#FFFF00"/>
<!-- font color -->
<text x="151.4" y="128.9" font-family="Liberation Sans" font-weight="bold" font-size="13" fill="#595959" textLength="9.3" lengthAdjust="spacingAndGlyphs">A</text>
<rect x="148" y="129" width="16" height="3.8" fill="#FF0000"/>
<!-- Aa -->
<text x="181.8" y="129.3" font-family="Liberation Sans" font-size="12.6" fill="#5F5F5F" textLength="15.6" lengthAdjust="spacingAndGlyphs">Aa</text>
<!-- grow / shrink -->
<text x="227.2" y="130.6" font-family="Liberation Sans" font-size="13.2" font-weight="bold" fill="#595959" textLength="9" lengthAdjust="spacingAndGlyphs">A</text>
<path d="M235,121 L237.5,117.8 L240,121 Z" fill="#3E6DB5"/>
<text x="250" y="130.6" font-family="Liberation Sans" font-size="10.5" font-weight="bold" fill="#595959" textLength="7.6" lengthAdjust="spacingAndGlyphs">A</text>
<path d="M257,117.8 H262 L259.5,121 Z" fill="#3E6DB5"/>

<!-- ===== paragraph group ===== -->
<g fill="#3E6DB5">
  <circle cx="279.4" cy="72.4" r="1.5"/><circle cx="279.4" cy="78.3" r="1.5"/><circle cx="279.4" cy="84.3" r="1.5"/>
</g>
<g fill="#5F5F5F">
  <rect x="283" y="71.9" width="8" height="1"/><rect x="283" y="77.8" width="8" height="1"/><rect x="283" y="83.8" width="8" height="1"/>
  <rect x="317.2" y="71.9" width="8.8" height="1"/><rect x="317.2" y="77.8" width="8.8" height="1"/><rect x="317.2" y="83.8" width="8.8" height="1"/>
  <rect x="350.5" y="71.9" width="10.5" height="1"/><rect x="354.5" y="77.8" width="6.5" height="1"/><rect x="358" y="83.8" width="3" height="1"/>
  <path d="M299,78.5 H304.2 L301.6,81.2 Z"/>
  <path d="M332.8,78.5 H338 L335.4,81.2 Z"/>
  <path d="M365,78.5 H370.2 L367.6,81.2 Z"/>
</g>
<g font-family="Liberation Sans" font-weight="bold" font-size="5.6" fill="#3E6DB5">
  <text x="311.6" y="74.8">1</text><text x="311.6" y="80.7">2</text><text x="311.6" y="86.6">3</text>
  <text x="345" y="74.8">1</text><text x="349" y="80.7">a</text><text x="353.6" y="86.6">i</text>
</g>
<!-- indents -->
<g fill="#5F5F5F">
  <rect x="387" y="71.8" width="16" height="1"/><rect x="395" y="74.8" width="8" height="1"/><rect x="395" y="77.8" width="8" height="1"/><rect x="395" y="80.8" width="8" height="1"/><rect x="387" y="83.8" width="16" height="1"/>
  <rect x="409" y="71.8" width="16" height="1"/><rect x="417" y="74.8" width="8" height="1"/><rect x="417" y="77.8" width="8" height="1"/><rect x="417" y="80.8" width="8" height="1"/><rect x="409" y="83.8" width="16" height="1"/>
</g>
<g fill="none" stroke="#3E6DB5" stroke-width="1.6">
  <path d="M394,78.3 H388.5 M390.8,75.8 L388.3,78.3 L390.8,80.8"/>
  <path d="M409.5,78.3 H415 M412.7,75.8 L415.2,78.3 L412.7,80.8"/>
</g>
<!-- alignment -->
<g fill="#5F5F5F">
  <rect x="278.2" y="97" width="13.7" height="1.2"/><rect x="278.2" y="100" width="9.5" height="1.2"/><rect x="278.2" y="103" width="13.7" height="1.2"/><rect x="278.2" y="106" width="9.5" height="1.2"/>
  <rect x="300" y="97" width="14" height="1.2"/><rect x="302" y="100" width="10" height="1.2"/><rect x="300" y="103" width="14" height="1.2"/><rect x="302" y="106" width="10" height="1.2"/>
  <rect x="322" y="97" width="14" height="1.2"/><rect x="326" y="100" width="10" height="1.2"/><rect x="322" y="103" width="14" height="1.2"/><rect x="326" y="106" width="10" height="1.2"/>
  <rect x="343.8" y="97" width="14.3" height="1.2"/><rect x="343.8" y="100" width="14.3" height="1.2"/><rect x="343.8" y="103" width="14.3" height="1.2"/><rect x="343.8" y="106" width="14.3" height="1.2"/>
  <rect x="381" y="96.8" width="8" height="1.1"/><rect x="381" y="99.8" width="8" height="1.1"/><rect x="381" y="102.8" width="8" height="1.1"/><rect x="381" y="105.8" width="8" height="1.1"/>
  <path d="M394,102 H399.2 L396.6,104.7 Z"/>
</g>
<g fill="none" stroke="#3E6DB5" stroke-width="1.5">
  <path d="M377.4,95.5 V100.5 M377.4,103.5 V108.5 M375,97.4 L377.4,95 L379.8,97.4 M375,106.6 L377.4,109 L379.8,106.6"/>
</g>
<!-- shading -->
<g fill="none" stroke="#6B6B6B" stroke-width="1">
  <path d="M285.1,118.8 L290.6,124.7 L285.1,128.9 L279.6,124.7 Z" fill="#fff"/>
  <rect x="282.5" y="117.6" width="3.3" height="3" fill="none"/>
  <path d="M284.2,120.5 V122.6"/>
  <rect x="277.7" y="129.3" width="15" height="3.2" fill="#fff"/>
</g>
<path d="M290,121.4 C292.6,122.2 293.4,125 292.8,127 C292.3,128.3 290.9,128.5 290.2,127.8 L291.3,124.3 Z" fill="#3E6DB5"/>
<path d="M299,124.3 H304.2 L301.6,127 Z" fill="#5F5F5F"/>
<!-- borders -->
<g fill="none" stroke="#6B6B6B" stroke-width="1" stroke-dasharray="1 1">
  <path d="M312,118.5 H325.5 M312,123.8 H325.5 M312,128.6 H325.5"/>
  <path d="M312.5,118 V129 M318.5,118 V129 M324.8,118 V129"/>
</g>
<rect x="312" y="130" width="13.4" height="1.2" fill="#6B6B6B"/>
<path d="M333,124.3 H338.2 L335.6,127 Z" fill="#5F5F5F"/>
<!-- sort -->
<text x="355.5" y="124" font-family="Liberation Sans" font-weight="bold" font-size="9.4" fill="#3E6DB5" textLength="6.8" lengthAdjust="spacingAndGlyphs">A</text>
<text x="355.6" y="132" font-family="Liberation Sans" font-weight="bold" font-size="9.2" fill="#7A3FB8" textLength="6.2" lengthAdjust="spacingAndGlyphs">Z</text>
<path d="M366.4,117 V131.5 M363.9,128.8 L366.4,131.6 L368.9,128.8" fill="none" stroke="#6B6B6B" stroke-width="1.1"/>
<!-- pilcrow -->
<path d="M392.5,118.8 H398.3 V120 H397.2 V130.9 H396 V120 H394.7 V130.9 H393.5 V125.8 C388.3,125.8 387.8,118.8 392.5,118.8 Z" fill="#6B6B6B"/>

<!-- gallery scroll arrows -->
<path d="M660.5,84 L663.5,80.8 L666.5,84 Z" fill="#B5B5B5"/>
<path d="M660.5,101.5 H666.5 L663.5,104.6 Z" fill="#5F5F5F"/>
<rect x="660.3" y="117.2" width="6.4" height="1" fill="#5F5F5F"/>
<path d="M660.5,120.3 H666.5 L663.5,123.4 Z" fill="#5F5F5F"/>

<!-- editing -->
<g fill="none" stroke="#3E6DB5">
  <circle cx="702.8" cy="81.8" r="3.3" stroke-width="1.6"/>
  <path d="M700.3,84.4 L695.4,89.3" stroke-width="2.4" stroke-linecap="round"/>
</g>
<path d="M697.6,124 H703.4 L700.5,127 Z" fill="#5F5F5F"/>

<!-- scrollbar arrows -->
<path d="M787.5,170.5 L791.5,166.3 L795.5,170.5 Z" fill="#606060"/>
<path d="M787.8,527 H795.2 L791.5,531 Z" fill="#606060"/>

<!-- ===== status bar icons ===== -->
<g fill="none" stroke="#666" stroke-width="1">
  <path d="M160.7,542.6 H156.7 V552.2 H160.7"/>
  <path d="M164.3,542.6 H168.6 V543.8"/>
  <path d="M164.3,552.2 H168.6"/>
  <path d="M162.5,543.5 V554.5 M160.9,552.8 L162.5,554.6 L164.1,552.8"/>
  <path d="M165.5,545.6 L169.4,550.4 M169.4,545.6 L165.5,550.4" stroke-width="1.5"/>
</g>
<g fill="none" stroke="#666" stroke-width="1">
  <path d="M525.5,542.5 H520.6 V552.4 H525.5 M527.5,542.5 H532.3 V552.4 H527.5"/>
  <path d="M526.5,543 V554.5 M525,553 L526.5,554.8 L528,553"/>
  <path d="M522.1,544.5 H525 M522.1,546.5 H525 M522.1,548.5 H525 M522.1,550.5 H525"/>
  <path d="M528.2,544.5 H531 M528.2,546.5 H531 M528.2,548.5 H531 M528.2,550.5 H531"/>
</g>
<g fill="none" stroke="#666" stroke-width="1.1">
  <rect x="558.7" y="542.7" width="12.6" height="11.4"/>
  <path d="M560.3,544.6 H569.8 M560.3,546.6 H569.8 M560.3,548.6 H569.8 M560.3,550.6 H569.8 M560.3,552.4 H569.8" stroke-width="0.9"/>
</g>
<g fill="none" stroke="#666" stroke-width="1.1">
  <path d="M603,552.2 H596.7 V542.7 H607.3 V546"/>
  <path d="M598.4,544.6 H605.5 M598.4,546.6 H604 M598.4,548.6 H601.5 M598.4,550.6 H601.5" stroke-width="0.9"/>
</g>
<circle cx="606" cy="550.8" r="4.4" fill="#F1F1F1"/>
<circle cx="606" cy="550.8" r="3.6" fill="#666"/>
<path d="M604,548 C605.5,549.5 604.5,551 606.5,551.5 C607.5,552 607,553.5 607.3,554.2 M606.5,547.3 C607.5,548.3 608.8,548 609.4,549" fill="none" stroke="#F1F1F1" stroke-width="0.8"/>
<!-- zoom slider -->
<rect x="626.8" y="548.3" width="6.2" height="1.5" fill="#666"/>
<rect x="637" y="548.2" width="100" height="1" fill="#9A9A9A"/>
<rect x="687.3" y="544.5" width="1" height="8.5" fill="#9A9A9A"/>
<rect x="679.6" y="543" width="4.5" height="11.1" fill="#6B6B6B"/>
<path d="M741,549 H749.4 M745.2,545 V553" stroke="#666" stroke-width="1.7" fill="none"/>
</svg>

<div class="t" style="left:315.90px;top:10px;font-size:12.1px;color:#FFFFFF;transform:scaleX(0.9459)">BA132_Hywater_Report  -  Word</div>
<div class="t" style="left:560.10px;top:10px;font-size:12.1px;color:#FFFFFF;transform:scaleX(0.9541)">Sign in</div>
<div class="t" style="left:20.60px;top:44px;font-size:12.1px;color:#FFFFFF;transform:scaleX(0.8974)">File</div>
<div class="t" style="left:136.00px;top:44px;font-size:12.1px;color:#FFFFFF;transform:scaleX(0.9587)">Insert</div>
<div class="t" style="left:194.50px;top:44px;font-size:12.1px;color:#FFFFFF;transform:scaleX(0.9296)">Design</div>
<div class="t" style="left:259.50px;top:44px;font-size:12.1px;color:#FFFFFF;transform:scaleX(0.9629)">Layout</div>
<div class="t" style="left:324.50px;top:44px;font-size:12.1px;color:#FFFFFF;transform:scaleX(0.9168)">References</div>
<div class="t" style="left:410.50px;top:44px;font-size:12.1px;color:#FFFFFF;transform:scaleX(1.0023)">Mailings</div>
<div class="t" style="left:484.50px;top:44px;font-size:12.1px;color:#FFFFFF;transform:scaleX(0.9119)">Review</div>
<div class="t" style="left:550.00px;top:44px;font-size:12.1px;color:#FFFFFF;transform:scaleX(0.9597)">View</div>
<div class="t" style="left:718.00px;top:44px;font-size:12.1px;color:#FFFFFF;transform:scaleX(0.8978)">Share</div>
<div class="t" style="left:74.75px;top:44px;font-size:12.1px;color:#34579C;transform:scaleX(0.9954)">Home</div>
<div class="t" style="left:621.50px;top:44px;font-size:12.1px;color:#C3CDE3;transform:scaleX(1.0117)">Tell me</div>
<div class="t" style="left:11.75px;top:108px;font-size:12.1px;color:#333333;transform:scaleX(0.8837)">Paste</div>
<div class="t" style="left:81.50px;top:74px;font-size:11.8px;color:#333333;transform:scaleX(0.9930)">Calibri (Body)</div>
<div class="t" style="left:226.00px;top:74px;font-size:11.8px;color:#333333;transform:scaleX(0.7959)">11</div>
<div class="t" style="left:3.60px;top:144px;font-size:11.5px;color:#5E5E5E;transform:scaleX(1.0163)">Clipboard</div>
<div class="t" style="left:151.60px;top:144px;font-size:11.5px;color:#5E5E5E;transform:scaleX(1.0130)">Font</div>
<div class="t" style="left:316.30px;top:144px;font-size:11.5px;color:#5E5E5E;transform:scaleX(0.9777)">Paragraph</div>
<div class="t" style="left:533.50px;top:144px;font-size:11.5px;color:#5E5E5E;transform:scaleX(0.8866)">Styles</div>
<div class="t" style="left:682.40px;top:107px;font-size:12.1px;color:#333333;transform:scaleX(0.9784)">Editing</div>
<div class="a" style="left:0;top:81px;width:504.5px;height:26px;overflow:hidden"><div class="t" style="left:445.60px;top:7px;font-size:12.1px;color:#000000;transform:scaleX(1.0541)">AaBbCcDc</div></div>
<div class="t" style="left:450.00px;top:112px;font-size:12.1px;color:#444444;transform:scaleX(0.9928)">¶ Normal</div>
<div class="a" style="left:0;top:81px;width:576.5px;height:26px;overflow:hidden"><div class="t" style="left:518.00px;top:7px;font-size:12.1px;color:#000000;transform:scaleX(1.0473)">AaBbCcDc</div></div>
<div class="t" style="left:516.80px;top:112px;font-size:12.1px;color:#444444;transform:scaleX(0.9512)">No Spacing</div>
<div class="a" style="left:0;top:78px;width:648.5px;height:26px;overflow:hidden"><div class="t" style="left:589.70px;top:6px;font-size:19.5px;color:#6088CC;transform:scaleX(0.8707)">AaBbCc</div></div>
<div class="t" style="left:592.40px;top:112px;font-size:12.1px;color:#444444;transform:scaleX(0.9538)">Heading 1</div>
<div class="t" style="left:7.40px;top:544px;font-size:11.5px;color:#505050;transform:scaleX(0.9635)">Page 1 of 2</div>
<div class="t" style="left:84.40px;top:544px;font-size:11.5px;color:#777777;transform:scaleX(0.9746)">564 words</div>
<div class="t" style="left:765.10px;top:544px;font-size:11.5px;color:#505050;transform:scaleX(0.9130)">90%</div>
<div class="t" style="left:113.20px;top:278px;font-size:16px;color:#3A62A8;transform:scaleX(1.0378)">Retailing</div>
<div class="t" style="left:112.50px;top:301px;font-size:12.1px;color:#000000;transform:scaleX(1.0031)">Retailing is important to understand for two main reasons. First,</div>
<div class="t" style="left:112.50px;top:318px;font-size:12.1px;color:#000000;transform:scaleX(1.0110)">most channel structures end with a retailer. While products may</div>
<div class="t" style="left:112.50px;top:335px;font-size:12.1px;color:#000000;transform:scaleX(0.9927)">pass through a wholesaler or involve a broker or agent, they also</div>
<div class="t" style="left:112.50px;top:352px;font-size:12.1px;color:#000000;transform:scaleX(1.0021)">include a retailer. Second, retail offers an immense number of job</div>
<div class="t" style="left:112.50px;top:369px;font-size:12.1px;color:#000000;transform:scaleX(1.0018)">opportunities. Today in the U.S., there are 3,793,621 retail</div>
<div class="t" style="left:112.50px;top:387px;font-size:12.1px;color:#000000;transform:scaleX(1.0034)">establishments that support 42 million jobs. Retail also contributes</div>
<div class="t" style="left:112.50px;top:404px;font-size:12.1px;color:#000000;transform:scaleX(0.9976)">$2.6 trillion to the U.S. gross domestic product.</div>
<div class="t" style="left:112.50px;top:431px;font-size:12.1px;color:#000000;transform:scaleX(0.9940)">One of the reasons the retail industry is so large and powerful is its diversity. For example, stores vary in</div>
<div class="t" style="left:112.50px;top:448px;font-size:12.1px;color:#000000;transform:scaleX(1.0002)">size, in the kinds of services that are provided, in the assortment of merchandise they carry, and in their</div>
<div class="t" style="left:112.50px;top:465px;font-size:12.1px;color:#000000;transform:scaleX(0.9998)">ownership and management structures.</div>
<div class="t" style="left:112.50px;top:491px;font-size:12.1px;color:#000000;transform:scaleX(0.9852)">The U.S. Census Bureau indicates that 94.5 percent of retail companies have only one location or store.</div>
<div class="t" style="left:112.50px;top:508px;font-size:12.1px;color:#000000;transform:scaleX(1.0021)">More than one million retail businesses in the U.S. have fewer than one hundred employees. Most retail</div>
<div class="t" style="left:112.50px;top:525px;font-size:12.1px;color:#000000;transform:scaleX(0.9961)">outlets are small and have weekly sales of just a few hundred dollars. A few are extremely large, having</div>
</body></html>
